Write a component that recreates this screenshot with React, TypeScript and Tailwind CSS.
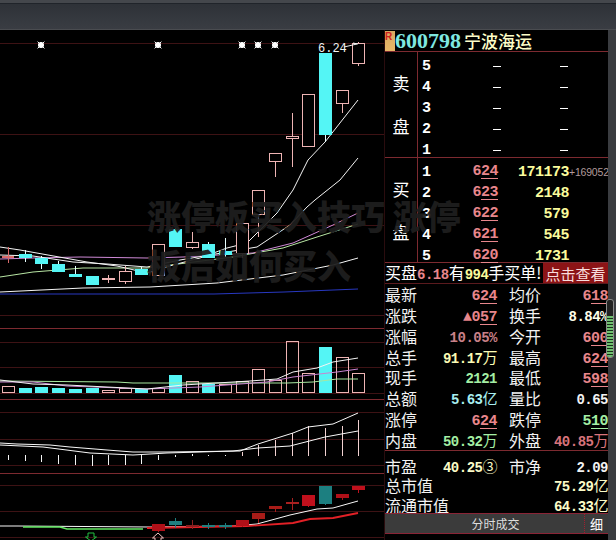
import React from 'react';

const RED_GRID = '#3d1214';
const RED_HEAVY = '#7d2a30';
const PINK = '#eeb4b4';
const CYAN = '#54f5f5';

const slotX = [8, 25, 41, 58, 75, 92, 108, 125, 141, 158, 175, 192, 208, 225, 242, 258, 275, 292, 308, 325, 342, 358];

// [slot, bodyTop, bodyBottom, wickTop, wickBottom, kind]
type Candle = [number, number, number, number, number, 'up' | 'down' | 'doji'];
const candles: Candle[] = [
  [1, 254, 257, 250, 262, 'down'],
  [2, 258, 263, 256, 269, 'down'],
  [3, 264, 271, 261, 272, 'down'],
  [4, 274, 276, 266, 277, 'down'],
  [5, 276, 284, 276, 285, 'down'],
  [6, 278, 279, 275, 283, 'doji'],
  [7, 271, 281, 266, 284, 'up'],
  [8, 269, 274, 267, 274, 'down'],
  [9, 244, 275, 244, 275, 'up'],
  [10, 229, 246, 228, 246, 'down'],
  [11, 242, 247, 232, 249, 'up'],
  [12, 244, 257, 242, 257, 'down'],
  [13, 251, 254, 238, 257, 'down'],
  [14, 223, 253, 223, 258, 'up'],
  [15, 190, 214, 190, 237, 'up'],
  [16, 153, 161, 153, 177, 'up'],
  [17, 136, 138, 113, 167, 'doji'],
  [18, 94, 146, 94, 146, 'up'],
  [19, 53, 134, 53, 142, 'down'],
  [20, 90, 103, 90, 113, 'up'],
  [21, 43, 63, 42, 66, 'up'],
];

const volumes: [number, number, boolean][] = [
  [0, 386, true], [1, 388, false], [2, 387, false], [3, 388, false], [4, 389, false], [5, 388, false],
  [6, 390, true], [7, 388, true], [8, 389, false], [9, 388, true], [10, 375, false], [11, 381, true],
  [12, 384, false], [13, 384, true], [14, 381, true], [15, 369, true], [16, 380, true], [17, 341, true],
  [18, 373, true], [19, 347, false], [20, 357, true], [21, 373, true],
];

const histogram: [number, number, number][] = [
  [0, 455, 460], [1, 455, 461], [2, 455, 462], [3, 455, 464], [4, 455, 465], [5, 455, 466], [6, 455, 465], [7, 455, 465],
  [8, 455, 464], [9, 455, 460], [10, 455, 457], [11, 454, 456], [12, 455, 456], [13, 455, 456],
  [14, 452, 456], [15, 445, 456], [16, 440, 456], [17, 433, 456], [18, 426, 456], [19, 428, 456], [20, 426, 456], [21, 420, 456],
];

// bottom indicator candles: [slot, top, bottom, wickTop, wickBottom, colour]
const signalBars: [number, number, number, number, number, string][] = [
  [9, 524, 531, 524, 532, '#b01018'],
  [10, 521, 525, 518, 528, '#1f7f80'],
  [11, 525, 527, 520, 529, '#8a2020'],
  [12, 525, 527, 523, 529, '#1f7f80'],
  [13, 525, 527, 523, 529, '#1f7f80'],
  [14, 520, 526, 520, 527, '#b01018'],
  [15, 513, 519, 513, 523, '#a81c18'],
  [16, 506, 509, 506, 512, '#a81c18'],
  [17, 502, 504, 498, 510, '#a82020'],
  [18, 495, 506, 495, 507, '#c0101c'],
  [19, 486, 504, 486, 505, '#1c7f80'],
  [20, 494, 498, 494, 500, '#b01018'],
  [21, 486, 490, 486, 493, '#c0101c'],
];

function Line({ points, color, width = 1 }: { points: string; color: string; width?: number }) {
  return <polyline points={points} fill="none" stroke={color} strokeWidth={width} />;
}

function Star({ x }: { x: number }) {
  return (
    <g stroke="#ffffff" strokeWidth={1}>
      <circle cx={x} cy={45} r={2.6} fill="#ffffff" />
      <line x1={x - 3.4} y1={41.6} x2={x + 3.4} y2={48.4} />
      <line x1={x + 3.4} y1={41.6} x2={x - 3.4} y2={48.4} />
    </g>
  );
}

function KlineChart() {
  const gridThin = [43, 134, 225, 315, 342, 367, 393, 412, 439, 465, 485, 511, 537];
  const gridHeavy = [328, 399, 473];

  return (
    <svg width={384} height={510} viewBox="0 30 384 510" className="block shrink-0" shapeRendering="crispEdges">
      {gridThin.map((y) => (
        <line key={y} x1={0} x2={384} y1={y + 0.5} y2={y + 0.5} stroke={RED_GRID} />
      ))}
      {gridHeavy.map((y) => (
        <line key={y} x1={0} x2={384} y1={y + 0.5} y2={y + 0.5} stroke={RED_HEAVY} />
      ))}

      {/* limit-up markers */}
      <g shapeRendering="auto">
        {[41, 158, 242, 258, 275].map((x) => (
          <Star key={x} x={x} />
        ))}
      </g>

      {/* price pane */}
      <g shapeRendering="auto">
        <Line points="0,294 214,294 284,292 358,289" color="#2838c0" />
        <Line points="0,292 83,288 150,287 217,283 283,275 333,265 358,258" color="#f4f4f4" />
        <Line points="0,277 33,272 83,268 147,268 233,257 283,248 317,237 358,224" color="#b8e6a4" />
        <Line points="0,259 33,258 80,257 147,258 183,257 253,253 293,243 333,225 358,213" color="#d08ad8" />
        <Line points="0,255 33,256 73,262 107,264 147,267 180,260 257,247 290,225 307,207 315,200 340,180 358,158" color="#f4f4f4" />
        <Line points="0,247 20,250 87,262 117,266 147,273 173,265 200,258 227,248 247,243 277,213 293,190 308,160 325,142 358,100" color="#f4f4f4" />
      </g>
      <rect x={2} y={256} width={12} height={2} fill="#d86a6a" />
      <line x1={8.5} x2={8.5} y1={247} y2={263} stroke="#d86a6a" />
      {candles.map(([slot, top, bottom, wickTop, wickBottom, kind]) => {
        const x = slotX[slot];
        const color = kind === 'down' ? CYAN : PINK;
        return (
          <g key={slot}>
            <line x1={x + 0.5} x2={x + 0.5} y1={wickTop} y2={wickBottom} stroke={kind === 'down' ? '#e8ffff' : color} />
            <rect
              x={x - 6 + 0.5}
              y={top + 0.5}
              width={12}
              height={bottom - top}
              fill={kind === 'down' ? CYAN : '#000000'}
              stroke={color}
            />
          </g>
        );
      })}
      <text x={318} y={52} fontFamily="'Liberation Mono', monospace" fontSize={12} fill="#f2f2f2" shapeRendering="auto">
        6.24
      </text>
      <g shapeRendering="auto" stroke="#f2f2f2">
        <line x1={344} y1={47} x2={357} y2={44} />
        <line x1={353} y1={43} x2={358} y2={44} />
      </g>

      {/* volume pane */}
      {volumes.map(([slot, top, hollow]) => {
        const x = slotX[slot];
        return hollow ? (
          <rect key={slot} x={x - 5.5} y={top + 0.5} width={12} height={392 - top} fill="none" stroke={PINK} />
        ) : (
          <rect key={slot} x={x - 6} y={top} width={13} height={393 - top} fill={CYAN} />
        );
      })}
      <g shapeRendering="auto">
        <Line points="0,381 117,382 133,383 217,383 287,383 313,382 337,379 358,379" color="#a8e8a0" />
        <Line points="0,382 33,382 67,386 147,389 200,387 267,382 293,377 337,372 358,369" color="#c884d0" />
        <Line points="0,380 33,384 67,385 147,389 183,385 250,381 277,379 293,372 317,368 333,362 358,358" color="#f4f4f4" />
      </g>

      {/* oscillator pane */}
      {histogram.map(([slot, top, bottom]) => (
        <line
          key={slot}
          x1={slotX[slot] + 0.5}
          x2={slotX[slot] + 0.5}
          y1={top}
          y2={bottom}
          stroke={top < 453 ? '#f2d2d2' : '#f4f4f4'}
        />
      ))}
      <g shapeRendering="auto">
        <Line points="0,445 43,447 90,453 133,455 167,453 233,451 258,448 290,446 325,437 358,431" color="#f8f8f8" />
        <Line points="0,443 17,444 50,445 70,447 107,450 133,452 167,452 240,451 258,444 293,433 308,427 333,424 358,413" color="#f8f8f8" />
      </g>

      {/* signal pane */}
      <g shapeRendering="auto">
        <Line points="0,526 18,526 150,527 233,526 257,524 290,515 317,509 333,508 358,501" color="#f8f8f8" />
        <Line points="23,527 60,527 67,529 143,529" color="#62e862" width={1.6} />
        <Line points="147,528 247,526 293,523 310,519 333,518 358,513" color="#e22026" width={1.8} />
      </g>
      {signalBars.map(([slot, top, bottom, wickTop, wickBottom, color]) => {
        const x = slotX[slot];
        return (
          <g key={slot}>
            <line x1={x + 0.5} x2={x + 0.5} y1={wickTop} y2={wickBottom} stroke={color} />
            <rect x={x - 6} y={top} width={13} height={bottom - top} fill={color} />
          </g>
        );
      })}
      <path d="M88 533 H94 V537 H96.500 L91 541 L85.500 537 H88 Z" fill="none" stroke="#22c040" shapeRendering="auto" />
      <path d="M158 533 L163.500 538 H161 V542 H155 V538 H152.500 Z" fill="none" stroke="#f0c0c0" shapeRendering="auto" />
    </svg>
  );
}

const labelFont = "font-['Noto_Sans_CJK_SC',sans-serif]";
const numFont = "font-['Liberation_Mono',monospace] font-bold";

function Price({ head, tail, color = 'text-[#e8868c]' }: { head: string; tail: string; color?: string }) {
  return (
    <span className={`${numFont} text-[15px] leading-[18px] tracking-[-0.5px] ${color}`}>
      {head}
      <span className="underline decoration-1 underline-offset-[3px]">{tail}</span>
    </span>
  );
}

function DepthRow({ n, price, volume, extra }: { n: number; price?: [string, string]; volume?: string; extra?: string }) {
  return (
    <div className="flex h-[21px] items-center pt-[7px]">
      <span className={`${numFont} ml-[4px] w-[12px] text-[15px] leading-none text-white`}>{n}</span>
      <span className="flex w-[64px] justify-end leading-none">
        {price ? <Price head={price[0]} tail={price[1]} /> : <span className="mr-[-3px] h-px w-[8px] bg-white" />}
      </span>
      <span className={`${numFont} flex w-[71px] justify-end text-[15px] leading-none tracking-[-0.5px] text-[#fbfb9c]`}>
        {volume ?? <span className="mr-[1px] h-px w-[8px] self-center bg-white" />}
      </span>
      {extra && (
        <span className="whitespace-nowrap font-['Liberation_Sans',sans-serif] text-[10.5px] leading-none tracking-[-0.2px] text-[#b09a9a]">
          {extra}
        </span>
      )}
    </div>
  );
}

function SideLabel({ top, bottom }: { top: string; bottom: string }) {
  return (
    <div className={`${labelFont} flex w-[33px] shrink-0 flex-col items-center justify-center gap-[25px] border-r border-[#7d2a30] text-[17px] leading-[18px] text-white`}>
      <span>{top}</span>
      <span>{bottom}</span>
    </div>
  );
}

function Quote({ label, children, wide }: { label: string; children: React.ReactNode; wide?: boolean }) {
  return (
    <div className={`flex items-center justify-between ${wide ? 'w-[223px]' : ''}`}>
      <span className={`${labelFont} whitespace-nowrap text-[16px] leading-none text-[#f2f2f2]`}>{label}</span>
      <span className="whitespace-nowrap">{children}</span>
    </div>
  );
}

function Val({ text, unit, color }: { text: string; unit?: string; color: string }) {
  return (
    <span className={`${numFont} text-[14px] leading-none tracking-[-0.5px] ${color}`}>
      {text}
      {unit && <span className={`${labelFont} text-[15px] font-normal`}>{unit}</span>}
    </span>
  );
}

const quoteRows: [string, React.ReactNode, string, React.ReactNode][] = [
  ['最新', <Price head="6" tail="24" />, '均价', <Price head="6" tail="18" />],
  ['涨跌', <Price head="▲0" tail="57" />, '换手', <Val text="8.84%" color="text-[#fdfde8]" />],
  ['涨幅', <Val text="10.05%" color="text-[#c98088]" />, '今开', <Price head="6" tail="00" />],
  ['总手', <Val text="91.17" unit="万" color="text-[#fbfbb4]" />, '最高', <Price head="6" tail="24" />],
  ['现手', <Val text="2121" color="text-[#a4eea4]" />, '最低', <Price head="5" tail="98" />],
  ['总额', <Val text="5.63" unit="亿" color="text-[#a8eef0]" />, '量比', <Val text="0.65" color="text-[#f2f2f2]" />],
  ['涨停', <Price head="6" tail="24" />, '跌停', <Price head="5" tail="10" color="text-[#a4eea4]" />],
  ['内盘', <Val text="50.32" unit="万" color="text-[#a4eea4]" />, '外盘', <Val text="40.85" unit="万" color="text-[#d8747c]" />],
];

function QuotePanel() {
  return (
    <div className="flex h-[510px] w-[224px] shrink-0 flex-col overflow-hidden border-l border-[#2a0c0e] bg-black">
      {/* stock title */}
      <div className="flex h-[22px] items-center border-b border-[#7d2a30]">
        <span className="h-[20px] w-[10px] bg-gradient-to-b from-[#d8a860] to-[#e8b868] font-['Liberation_Sans',sans-serif] text-[10px] font-bold leading-[12px] text-[#d02020]">
          R
        </span>
        <span className="font-['Liberation_Serif',serif] text-[22px] font-bold leading-[20px] text-[#7fe8e0]">600798</span>
        <span className="ml-[3px] font-['Noto_Sans_CJK_SC',sans-serif] text-[17px] font-medium leading-[20px] text-[#fdfdc8]">宁波海运</span>
      </div>

      <div className="flex h-[106px] border-b border-[#7d2a30]">
        <SideLabel top="卖" bottom="盘" />
        <div className="flex-1">
          {[5, 4, 3, 2, 1].map((n) => (
            <DepthRow key={n} n={n} />
          ))}
        </div>
      </div>

      <div className="flex h-[105px] border-b border-[#7d2a30]">
        <SideLabel top="买" bottom="盘" />
        <div className="flex-1">
          <DepthRow n={1} price={['6', '24']} volume="171173" extra="+169052" />
          <DepthRow n={2} price={['6', '23']} volume="2148" />
          <DepthRow n={3} price={['6', '22']} volume="579" />
          <DepthRow n={4} price={['6', '21']} volume="545" />
          <DepthRow n={5} price={['6', '20']} volume="1731" />
        </div>
      </div>

      {/* order alert */}
      <div className="flex h-[21px] items-center justify-between border-b border-[#5a1a1e]">
        <span className={`${labelFont} whitespace-nowrap text-[16px] leading-none text-white`}>
          买盘<span className={`${numFont} text-[14px] tracking-[-0.5px] text-[#e8868c]`}>6.18</span>有
          <span className={`${numFont} text-[14px] tracking-[-0.5px] text-[#fbfb9c]`}>994</span>手买单!
        </span>
        <span className={`${labelFont} flex h-[20px] w-[65px] items-center justify-center bg-[#8c1416] text-[15px] leading-none text-[#f8dede]`}>
          点击查看
        </span>
      </div>

      <div className="grid h-[167px] grid-cols-[112px_99px] grid-rows-8 gap-x-[12px] border-b border-[#7d2a30]">
        {quoteRows.map(([a, av, b, bv]) => (
          <React.Fragment key={a}>
            <Quote label={a}>{av}</Quote>
            <Quote label={b}>{bv}</Quote>
          </React.Fragment>
        ))}
      </div>

      <div className="grid h-[62px] grid-rows-[20px_21px_20px] pt-[3px]">
        <div className="grid grid-cols-[112px_99px] gap-x-[12px]">
          <Quote label="市盈">
            <Val text="40.25" unit="③" color="text-[#fbfbc8]" />
          </Quote>
          <Quote label="市净">
            <Val text="2.09" color="text-[#f2f2f2]" />
          </Quote>
        </div>
        <Quote label="总市值" wide>
          <Val text="75.29" unit="亿" color="text-[#fbfbc8]" />
        </Quote>
        <Quote label="流通市值" wide>
          <Val text="64.33" unit="亿" color="text-[#fbfbc8]" />
        </Quote>
      </div>

      {/* bottom tabs */}
      <div className="flex h-[21px] shrink-0 border-y border-[#8a2436] bg-[#3b3b3b]">
        <span className={`${labelFont} flex w-[200px] items-center justify-center pl-[22px] text-[12px] leading-none text-[#dddddd]`}>分时成交</span>
        <span className={`${labelFont} flex w-[24px] items-center justify-center border-l border-dotted border-[#a02030] text-[13px] leading-none text-white`}>细</span>
      </div>
    </div>
  );
}

export default function App() {
  return (
    <div className="relative h-[540px] w-[616px] overflow-hidden bg-black">
      <div className="h-[30px] border-b border-[#4a4c50] bg-gradient-to-b from-[#2c3036] to-[#3a3d43]">
        <div className="h-[4px] border-b border-[#20242a] bg-[#44474c]" />
      </div>
      <div className="flex h-[510px]">
        <KlineChart />
        <QuotePanel />
        <div className="flex-1 bg-[#3a3c40]" />
      </div>

      {/* scroll handle */}
      <div className="absolute left-[606px] top-[299px] flex h-[59px] w-[8px] flex-col justify-end overflow-hidden rounded-[3px] border border-[#8a8a8a] bg-[#222222] pt-[16px]">
        <div className="h-full bg-[repeating-linear-gradient(to_bottom,#6fbf6f_0px,#6fbf6f_2px,#17301a_2px,#17301a_3px)]" />
      </div>

      {/* article headline */}
      <h1 className="absolute left-[147px] top-[191px] w-[330px] font-['Noto_Sans_CJK_SC',sans-serif] text-[34px] font-black leading-[49px] text-[#1e1e1e]/95">
        涨停板买入技巧 涨停板后如何买入
      </h1>
    </div>
  );
}
